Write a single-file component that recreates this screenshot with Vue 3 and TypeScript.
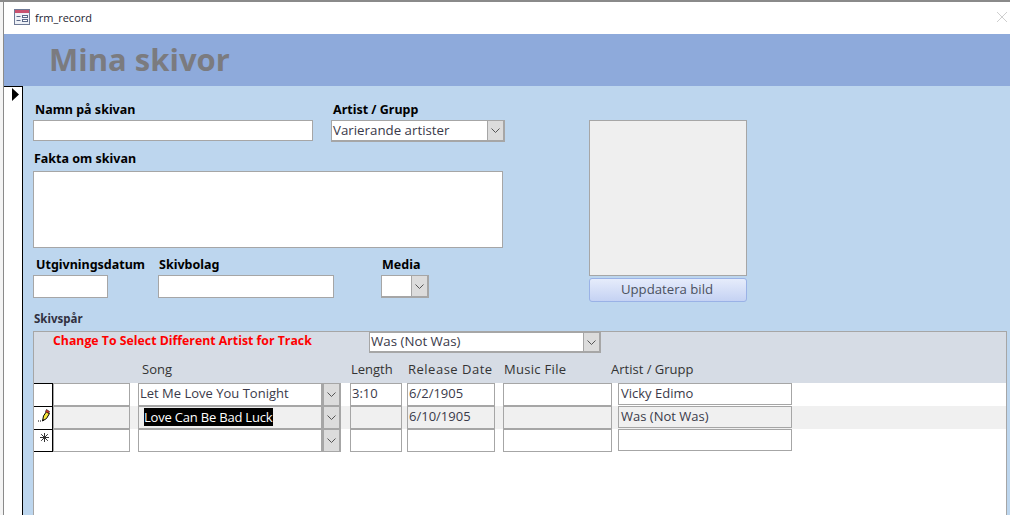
<script setup lang="ts">
interface Track {
  song: string
  length: string
  release: string
  file: string
  artist: string
  marker: 'none' | 'pencil' | 'new'
  selected?: boolean
}

const tracks: Track[] = [
  { song: 'Let Me Love You Tonight', length: '3:10', release: '6/2/1905', file: '', artist: 'Vicky Edimo', marker: 'none' },
  { song: 'Love Can Be Bad Luck', length: '', release: '6/10/1905', file: '', artist: 'Was (Not Was)', marker: 'pencil', selected: true },
  { song: '', length: '', release: '', file: '', artist: '', marker: 'new' },
]
</script>

<template>
  <div class="window">
    <div class="titlebar">
      <svg class="form-icon" width="16" height="16" viewBox="0 0 16 16">
        <rect x="0.5" y="0.5" width="15" height="15" fill="#eef1f7" stroke="#6f7a96" />
        <rect x="1" y="1" width="14" height="3" fill="#c8516f" />
        <path d="M2.500 7.500h4M2.500 11.500h4" stroke="#5a6888" fill="none" />
        <rect x="8.500" y="6.500" width="5" height="2" fill="#fff" stroke="#5a6888" />
        <rect x="8.500" y="10.500" width="5" height="2" fill="#fff" stroke="#5a6888" />
      </svg>
      <span class="title-text">frm_record</span>
      <svg class="close" width="10" height="10" viewBox="0 0 10 10">
        <path d="M0 0l10 10M10 0L0 10" stroke="#cfcfcf" fill="none" />
      </svg>
    </div>

    <header class="banner">Mina skivor</header>

    <div class="form-body">
      <div class="selector">
        <svg class="current" width="7" height="13" viewBox="0 0 7 13"><path d="M0 0l7 6.500L0 13z" fill="#000" /></svg>
      </div>

      <div class="detail">
        <div class="top">
          <div class="left">
            <div class="row-one">
              <div class="field name-field">
                <span class="label">Namn på skivan</span>
                <div class="box name-box"></div>
              </div>
              <div class="field artist-field">
                <span class="label">Artist / Grupp</span>
                <div class="combo artist-combo">
                  <span class="combo-text">Varierande artister</span>
                  <span class="drop"><svg width="9" height="5" viewBox="0 0 9 5"><path d="M0.500 0.500l4 4 4-4" fill="none" stroke="#555" /></svg></span>
                </div>
              </div>
            </div>

            <div class="field fakta-field">
              <span class="label">Fakta om skivan</span>
              <div class="box fakta-box"></div>
            </div>

            <div class="row-three">
              <div class="field date-field">
                <span class="label">Utgivningsdatum</span>
                <div class="box date-box"></div>
              </div>
              <div class="field label-field">
                <span class="label">Skivbolag</span>
                <div class="box label-box"></div>
              </div>
              <div class="field media-field">
                <span class="label">Media</span>
                <div class="combo media-combo">
                  <span class="combo-text"></span>
                  <span class="drop"><svg width="9" height="5" viewBox="0 0 9 5"><path d="M0.500 0.500l4 4 4-4" fill="none" stroke="#555" /></svg></span>
                </div>
              </div>
            </div>
          </div>

          <div class="picture-col">
            <div class="picture"></div>
            <button class="update" type="button">Uppdatera bild</button>
          </div>
        </div>

        <div class="sub-label">Skivspår</div>

        <section class="subform">
          <div class="sub-header">
            <div class="change-row">
              <span class="change-text">Change To Select Different Artist for Track</span>
              <div class="combo change-combo">
                <span class="combo-text">Was (Not Was)</span>
                <span class="drop"><svg width="9" height="5" viewBox="0 0 9 5"><path d="M0.500 0.500l4 4 4-4" fill="none" stroke="#555" /></svg></span>
              </div>
            </div>
            <div class="grid-row heads">
              <span class="c-sel"></span>
              <span class="c-blank"></span>
              <span class="c-song h-song">Song</span>
              <span class="c-len h-len">Length</span>
              <span class="c-rel h-rel">Release Date</span>
              <span class="c-file h-file">Music File</span>
              <span class="c-art h-art">Artist / Grupp</span>
            </div>
          </div>

          <div class="records">
            <div v-for="(t, i) in tracks" :key="i" class="grid-row record" :class="{ shaded: t.marker === 'pencil', last: i === tracks.length - 1 }">
              <span class="c-sel rec-sel">
                <svg v-if="t.marker === 'pencil'" width="12" height="15" viewBox="0 0 12 15">
                  <path d="M0 13h1M2 13h1" stroke="#000" fill="none" />
                  <path d="M4.500 13l1-5 3-4.500 3 2-3 5z" fill="#f7e63c" stroke="#000" />
                  <path d="M8.500 1.500l3 2-1 2-3-2z" fill="#d9382c" stroke="#000" stroke-width="0.6" />
                  <path d="M4.500 13l1.500-1-1-1z" fill="#000" />
                </svg>
                <svg v-else-if="t.marker === 'new'" class="star" width="9" height="9" viewBox="0 0 9 9">
                  <path d="M4.500 0v9M0 4.500h9M1.200 1.200l6.600 6.600M7.800 1.200l-6.600 6.600" stroke="#333" fill="none" />
                </svg>
              </span>
              <span class="c-blank cell"></span>
              <span class="c-song song-cell">
                <span class="cell song-text"><span :class="{ highlight: t.selected }">{{ t.song }}</span></span>
                <span class="drop song-drop"><svg width="9" height="5" viewBox="0 0 9 5"><path d="M0.500 0.500l4 4 4-4" fill="none" stroke="#555" /></svg></span>
              </span>
              <span class="c-len cell">{{ t.length }}</span>
              <span class="c-rel cell">{{ t.release }}</span>
              <span class="c-file cell"></span>
              <span class="c-art cell art-cell">{{ t.artist }}</span>
            </div>
          </div>
        </section>
      </div>
    </div>
  </div>
</template>

<style>
html, body { margin: 0; padding: 0; overflow: hidden; background: #fff; }
</style>

<style scoped>
.window {
  width: 1010px;
  height: 515px;
  box-sizing: border-box;
  border-top: 2px solid #8a8a8a;
  padding-left: 3px;
  background: #f4f4f4;
  display: flex;
  flex-direction: column;
  overflow: hidden;
  font-family: "Open Sans", "Noto Sans", sans-serif;
}
.titlebar {
  height: 32px;
  flex: none;
  box-sizing: border-box;
  border-left: 1px solid #8a8a8a;
  background: #fff;
  display: flex;
  align-items: center;
  padding: 0 3px 2px 10px;
}
.form-icon { flex: none; }
.title-text { margin-left: 5px; font-size: 11px; color: #1f1f33; }
.close { margin-left: auto; }
.banner {
  height: 52px;
  flex: none;
  box-sizing: border-box;
  border-left: 1px solid #8a8a8a;
  background: #8eaadb;
  color: #7b7b7f;
  font-family: "Open Sans", sans-serif;
  font-weight: 700;
  font-size: 31px;
  line-height: 50px;
  padding-left: 45px;
}
.form-body {
  flex: 1;
  min-height: 0;
  display: flex;
  border-left: 1px solid #8a8a8a;
}
.selector {
  width: 19px;
  flex: none;
  box-sizing: border-box;
  background: #fff;
  border-top: 1px solid #000;
  border-right: 1px solid #000;
  padding: 1px 0 0 8px;
}
.current { display: block; }
.detail {
  flex: 1;
  min-width: 0;
  background: #bdd6ee;
  padding: 0 3px 0 10px;
  display: flex;
  flex-direction: column;
}
.top { display: flex; height: 224px; flex: none; }
.left { width: 556px; flex: none; padding-top: 17px; box-sizing: border-box; }
.row-one { display: flex; height: 48px; }
.field { display: flex; flex-direction: column; }
.label {
  font-family: "Noto Sans", sans-serif;
  font-weight: 700;
  font-size: 12.5px;
  line-height: 14px;
  height: 17px;
  color: #000;
  padding-left: 2px;
  white-space: nowrap;
}
.box, .combo {
  box-sizing: border-box;
  background: #fff;
  border: 1px solid #a6a6a6;
}
.name-field { width: 298px; }
.name-box { width: 280px; height: 21px; }
.artist-combo { width: 174px; height: 22px; }
.fakta-field .label { padding: 1px 0 0 1px; height: 19px; }
.fakta-box { width: 470px; height: 77px; }
.row-three { display: flex; margin-top: 10px; }
.date-field { width: 125px; }
.date-field .label { padding-left: 3px; }
.date-box { width: 75px; height: 23px; }
.label-field { width: 223px; }
.label-field .label, .media-field .label { padding-left: 1px; }
.label-box { width: 176px; height: 23px; }
.media-combo { width: 48px; height: 23px; }
.combo {
  display: flex;
  align-items: stretch;
  border-width: 1px 2px 2px 1px;
}
.combo-text {
  flex: 1;
  min-width: 0;
  font-size: 13.3px;
  line-height: 19px;
  padding-left: 1px;
  color: #3a3a4a;
  white-space: nowrap;
}
.change-combo .combo-text { line-height: 17px; }
.drop {
  width: 16px;
  flex: none;
  box-sizing: border-box;
  background: #dcdcdc;
  border-left: 1px solid #a6a6a6;
  display: flex;
  align-items: center;
  justify-content: center;
}
.picture-col { padding-top: 34px; width: 158px; }
.picture {
  box-sizing: border-box;
  height: 156px;
  background: #efefef;
  border: 1px solid #a6a6a6;
}
.update {
  display: block;
  margin-top: 2px;
  width: 158px;
  height: 24px;
  padding: 0 2px 2px 0;
  box-sizing: border-box;
  border: 1px solid #9ab2e6;
  border-radius: 3px;
  background: linear-gradient(#e6ecfb, #c5d2f3);
  color: #4b5160;
  font-family: "Open Sans", sans-serif;
  font-size: 13.2px;
}
.sub-label {
  height: 19px;
  line-height: 14px;
  padding-top: 2px;
  padding-left: 1px;
  font-family: "Noto Sans", sans-serif;
  font-weight: 700;
  font-size: 11.5px;
  color: #303040;
}
.subform {
  flex: 1;
  min-height: 0;
  box-sizing: border-box;
  border: 1px solid #a6a6a6;
  border-bottom: 0;
  background: #fff;
  display: flex;
  flex-direction: column;
}
.sub-header {
  height: 51px;
  flex: none;
  background: #d6dce5;
}
.change-row { height: 21px; display: flex; }
.change-text {
  width: 316px;
  margin-left: 19px;
  font-size: 12.3px;
  line-height: 18px;
  font-weight: 700;
  color: #ff0000;
  white-space: nowrap;
}
.change-combo { width: 232px; height: 21px; }
.grid-row { display: flex; }
.heads {
  height: 30px;
  align-items: flex-start;
  padding-top: 7px;
  box-sizing: border-box;
  font-size: 13px;
  line-height: 18px;
  color: #333;
}
.c-sel { width: 19px; flex: none; }
.c-blank { width: 77px; flex: none; }
.c-song { width: 203px; flex: none; margin-left: 8px; }
.c-len { width: 52px; flex: none; margin-left: 9px; }
.c-rel { width: 88px; flex: none; margin-left: 5px; }
.c-file { width: 109px; flex: none; margin-left: 8px; }
.c-art { width: 174px; flex: none; margin-left: 6px; }
.h-song { padding-left: 4px; box-sizing: border-box; }
.h-len { padding-left: 1px; box-sizing: border-box; }
.h-rel { padding-left: 1px; box-sizing: border-box; letter-spacing: 0.5px; white-space: nowrap; }
.h-file { padding-left: 1px; box-sizing: border-box; letter-spacing: 0.3px; }
.h-art { margin-left: -1px; box-sizing: border-box; width: 175px; }
.record { height: 23px; }
.record.shaded { background: #f0f0f0; }
.rec-sel {
  box-sizing: border-box;
  background: #fff;
  border-top: 1px solid #000;
  border-right: 1px solid #000;
  display: flex;
  align-items: flex-start;
  justify-content: center;
  padding: 1px 0 0 2px;
}
.star { margin-top: 2px; }
.record.last .rec-sel { border-bottom: 1px solid #000; }
.cell {
  box-sizing: border-box;
  border: 1px solid #a6a6a6;
  font-size: 13px;
  line-height: 18px;
  padding-left: 1px;
  color: #3a3a4a;
  white-space: nowrap;
  overflow: hidden;
}
.record .cell { height: 23px; }
.record .art-cell { height: 22px; line-height: 18px; padding-left: 2px; }
.song-cell { display: flex; }
.song-cell .song-text { flex: 1; min-width: 0; }
.song-drop { width: 19px; border: 1px solid #a6a6a6; border-right-width: 2px; border-left-width: 2px; height: 23px; }
.highlight { background: #000; color: #fff; margin-left: 4px; margin-top: 1px; display: inline-block; padding-right: 1px; letter-spacing: -0.2px; }
</style>
